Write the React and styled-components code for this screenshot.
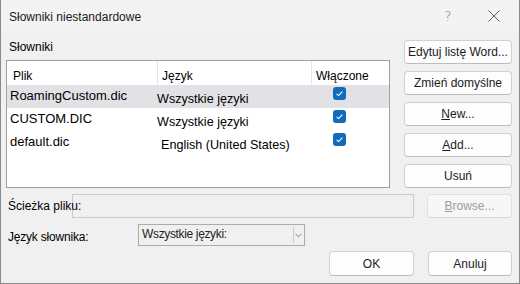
import React from 'react';
import styled, { createGlobalStyle } from 'styled-components';

const GlobalStyle = createGlobalStyle`
    body {
        margin: 0;
        font-family: "Liberation Sans", Arial, sans-serif;
        background: #f0f0f0;
    }
`;

const dictionaries = [
    { file: 'RoamingCustom.dic', lang: 'Wszystkie języki', shift: -1, selected: true },
    { file: 'CUSTOM.DIC', lang: 'Wszystkie języki', shift: -1 },
    { file: 'default.dic', lang: 'English (United States)', shift: 4 },
];

const sideButtons = [
    { label: 'Edytuj listę Word...' },
    { label: 'Zmień domyślne' },
    { key: 'N', rest: 'ew...' },
    { key: 'A', rest: 'dd...' },
    { label: 'Usuń' },
];

function CheckIcon() {
    return (
        <svg width="13" height="13" viewBox="0 0 13 13">
            <rect x="0" y="0" width="13" height="13" rx="3" fill="#0f6cbd" />
            <polyline points="3.6,6.8 5.6,8.6 9.4,4.6" fill="none" stroke="#ffffff" strokeWidth="1.1" />
        </svg>
    );
}

function App() {
    return (
        <>
            <GlobalStyle />
            <Window>
                <TitleBar>
                    <Title>Słowniki niestandardowe</Title>
                    <TitleActions>
                        <Help>?</Help>
                        <Close>
                            <svg width="12" height="12" viewBox="0 0 12 12">
                                <path d="M0.5 0.5 L11.5 11.5 M11.5 0.5 L0.5 11.5" stroke="#5a5a5a" strokeWidth="1" />
                            </svg>
                        </Close>
                    </TitleActions>
                </TitleBar>
                <Body>
                    <TopSection>
                        <ListColumn>
                            <GroupLabel>Słowniki</GroupLabel>
                            <List>
                                <HeaderRow>
                                    <HeaderCell>Plik</HeaderCell>
                                    <HeaderCell $divider>Język</HeaderCell>
                                    <HeaderCell $divider>Włączone</HeaderCell>
                                </HeaderRow>
                                {dictionaries.map((d) => (
                                    <Row key={d.file} $selected={d.selected}>
                                        <FileCell>{d.file}</FileCell>
                                        <LangCell $shift={d.shift}>{d.lang}</LangCell>
                                        <CheckCell><CheckIcon /></CheckCell>
                                    </Row>
                                ))}
                            </List>
                        </ListColumn>
                        <SideButtons>
                            {sideButtons.map((b, i) => (
                                <Button key={i}>
                                    {b.label ? b.label : <><u>{b.key}</u>{b.rest}</>}
                                </Button>
                            ))}
                        </SideButtons>
                    </TopSection>
                    <PathRow>
                        <PathLabel>Ścieżka pliku:</PathLabel>
                        <PathInput />
                        <Button $width={85} disabled><u>B</u>rowse...</Button>
                    </PathRow>
                    <LangRow>
                        <LangLabel>Język słownika:</LangLabel>
                        <Select>
                            <SelectValue>Wszystkie języki:</SelectValue>
                            <SelectArrow>
                                <svg width="7" height="5" viewBox="0 0 7 5">
                                    <polyline points="0.5,0.8 3.5,3.8 6.5,0.8" fill="none" stroke="#808080" strokeWidth="1" />
                                </svg>
                            </SelectArrow>
                        </Select>
                    </LangRow>
                    <Footer>
                        <Button $width={85} $height={25}>OK</Button>
                        <Button $width={84} $height={25}>Anuluj</Button>
                    </Footer>
                </Body>
            </Window>
        </>
    );
}

const Window = styled.div`
    width: 520px;
    height: 284px;
    box-sizing: border-box;
    border: 1px solid #8a8a8a;
    border-top: none;
    background: #f0f0f0;
    display: flex;
    flex-direction: column;
    color: #000;
`;

const TitleBar = styled.div`
    height: 32px;
    flex-shrink: 0;
    background: #f3f3f3;
    display: flex;
    align-items: center;
    justify-content: space-between;
    padding-left: 8px;
`;

const Title = styled.div`
    font-size: 12px;
    color: #1a1a1a;
    margin-top: 1px;
`;

const TitleActions = styled.div`
    display: flex;
    align-items: center;
`;

const Help = styled.div`
    width: 46px;
    text-align: center;
    font-size: 14px;
    color: #7a7a7a;
    font-family: "DejaVu Sans", sans-serif;
    font-weight: 300;
`;

const Close = styled.div`
    width: 46px;
    display: flex;
    justify-content: center;
    padding-right: 2px;
`;

const Body = styled.div`
    padding: 8px 7px 0 5px;
    display: flex;
    flex-direction: column;
`;

const TopSection = styled.div`
    display: flex;
    gap: 14px;
`;

const ListColumn = styled.div`
    width: 384px;
    display: flex;
    flex-direction: column;
`;

const GroupLabel = styled.div`
    font-size: 12px;
    line-height: 14px;
    padding-left: 3px;
    margin-bottom: 6px;
`;

const List = styled.div`
    height: 128px;
    box-sizing: border-box;
    border: 1px solid #a0a0a0;
    background: #ffffff;
`;

const columns = '150px 154px 1fr';

const HeaderRow = styled.div`
    display: grid;
    grid-template-columns: ${columns};
    height: 24px;
`;

const HeaderCell = styled.div`
    font-size: 12px;
    display: flex;
    align-items: flex-end;
    padding: 0 0 2px ${(p) => (p.$divider ? 4 : 6)}px;
    border-left: ${(p) => (p.$divider ? '1px solid #e5e5e5' : 'none')};
`;

const Row = styled.div`
    display: grid;
    grid-template-columns: ${columns};
    height: 23px;
    background: ${(p) => (p.$selected ? '#e2e2e6' : 'transparent')};
    font-size: 13px;
`;

const FileCell = styled.div`
    padding-left: 3px;
    line-height: 22px;
`;

const LangCell = styled.div`
    padding-left: ${(p) => p.$shift}px;
    line-height: 22px;
    padding-top: 3px;
    font-size: 12.6px;
    white-space: nowrap;
`;

const CheckCell = styled.div`
    padding: 2px 0 0 22px;
    line-height: 0;
`;

const SideButtons = styled.div`
    display: flex;
    flex-direction: column;
    gap: 7px;
`;

const Button = styled.button`
    width: ${(p) => p.$width || 108}px;
    height: ${(p) => p.$height || 24}px;
    padding: 0;
    box-sizing: border-box;
    border: 1px solid ${(p) => (p.disabled ? '#e0e0e0' : '#d0d0d0')};
    border-bottom-color: ${(p) => (p.disabled ? '#d8d8d8' : '#bcbcbc')};
    border-radius: 4px;
    background: ${(p) => (p.disabled ? '#f7f7f7' : '#fdfdfd')};
    color: ${(p) => (p.disabled ? '#9d9d9d' : '#1b1b1b')};
    font-family: "Liberation Sans", Arial, sans-serif;
    font-size: 12px;
    white-space: nowrap;
    overflow: visible;
    flex-shrink: 0;
`;

const PathRow = styled.div`
    display: flex;
    align-items: center;
    margin-top: 6px;
    height: 24px;
`;

const PathLabel = styled.div`
    width: 64px;
    margin-left: 2px;
    font-size: 12px;
    white-space: nowrap;
    position: relative;
    z-index: 1;
`;

const PathInput = styled.div`
    width: 342px;
    height: 24px;
    box-sizing: border-box;
    border: 1px solid #cccccc;
    margin-right: 13px;
`;

const LangRow = styled.div`
    display: flex;
    align-items: center;
    margin-top: 6px;
    height: 22px;
`;

const LangLabel = styled.div`
    width: 130px;
    margin-left: 2px;
    font-size: 12px;
    padding-top: 4px;
    letter-spacing: -0.2px;
`;

const Select = styled.div`
    width: 167px;
    height: 22px;
    box-sizing: border-box;
    border: 1px solid #ababab;
    display: flex;
    align-items: stretch;
`;

const SelectValue = styled.div`
    flex: 1;
    font-size: 12px;
    letter-spacing: -0.35px;
    color: #222;
    padding-left: 3px;
    line-height: 19px;
`;

const SelectArrow = styled.div`
    width: 9px;
    margin: 2px 0;
    border-left: 1px solid #c8c8c8;
    display: flex;
    align-items: center;
    justify-content: center;
    padding-right: 1px;
`;

const Footer = styled.div`
    display: flex;
    justify-content: flex-end;
    gap: 14px;
    margin-top: 5px;
`;

export default App;
